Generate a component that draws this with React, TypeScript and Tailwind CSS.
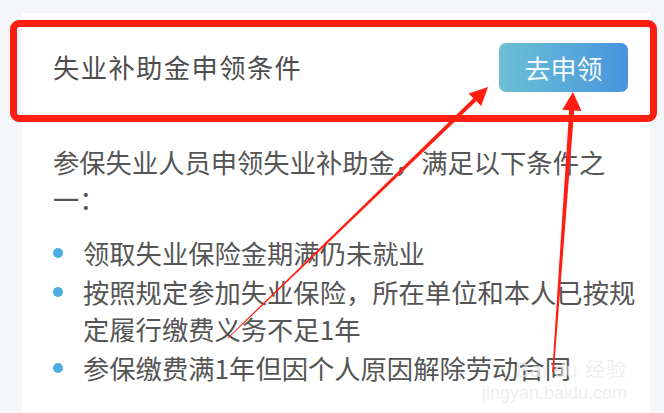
import React from 'react'

const items = [
  ['领取失业保险金期满仍未就业'],
  ['按照规定参加失业保险，所在单位和本人已按规', '定履行缴费义务不足1年'],
  ['参保缴费满1年但因个人原因解除劳动合同'],
]

function Arrows() {
  return (
    <svg className="absolute left-0 top-0 pointer-events-none" width="664" height="413" viewBox="0 0 664 413">
      {/* arrow to the left edge of the button */}
      <polygon points="227.7,337.7 228.3,338.3 476.4,101 473.6,98" fill="#ff1e12" />
      <polygon points="488,87 481.2,106 468.6,93.6" fill="#ff1e12" />
      {/* arrow to the bottom of the button */}
      <polygon points="552.2,372 553.8,372 574.2,110 569.2,110" fill="#ff1e12" />
      <polygon points="573,92 581.5,111 562.2,109.8" fill="#ff1e12" />
    </svg>
  )
}

export default function App() {
  return (
    <div
      className="relative w-[664px] h-[413px] overflow-hidden bg-[#f4f6f9]"
      style={{ fontFamily: '"Noto Sans CJK SC", "Noto Sans", sans-serif' }}
    >
      <div className="ml-[22px] mr-[14px] mt-[13px] h-[400px] bg-white">
        {/* header */}
        <div className="h-[108px] flex items-center justify-between pl-[31px] pr-[22px]">
          <span className="text-[26.3px] tracking-[1.4px] text-[#4d4d4d] whitespace-nowrap">失业补助金申领条件</span>
          <button className="w-[129px] h-[49px] rounded-[7px] bg-gradient-to-r from-[#6cc0d5] to-[#4994dd] text-[#f4fbff] text-[26px] flex items-center justify-center">
            去申领
          </button>
        </div>

        {/* body */}
        <div className="pl-[31px] pt-[22px] text-[#555555] text-[26.3px] leading-[37px] whitespace-nowrap">
          <p>参保失业人员申领失业补助金，满足以下条件之</p>
          <p>一：</p>
          <ul className="mt-[17px] flex flex-col gap-[2px]">
            {items.map((lines, i) => (
              <li key={i} className="flex">
                <span className="w-[30px] h-[37px] flex items-center shrink-0">
                  <span className="w-[10px] h-[10px] rounded-full bg-[#4aaee0]" />
                </span>
                <span className="flex flex-col">
                  {lines.map((l) => (
                    <span key={l}>{l}</span>
                  ))}
                </span>
              </li>
            ))}
          </ul>
        </div>
      </div>

      {/* annotation frame */}
      <div className="absolute left-[10px] top-[20px] w-[647px] h-[102px] border-[7px] border-[#ff1e12] rounded-[9px]" />
      <Arrows />

      {/* watermark */}
      <div className="absolute right-[37px] top-[360px] flex flex-col items-end text-[#ebebeb] leading-none opacity-80">
        <span className="text-[20px] tracking-[1px]" style={{ fontFamily: '"Liberation Sans", "Noto Sans CJK SC", sans-serif' }}>
          Bai du 经验
        </span>
        <span className="mt-[4px] text-[18px]" style={{ fontFamily: '"Liberation Sans", sans-serif' }}>
          jingyan.baidu.com
        </span>
      </div>
    </div>
  )
}
